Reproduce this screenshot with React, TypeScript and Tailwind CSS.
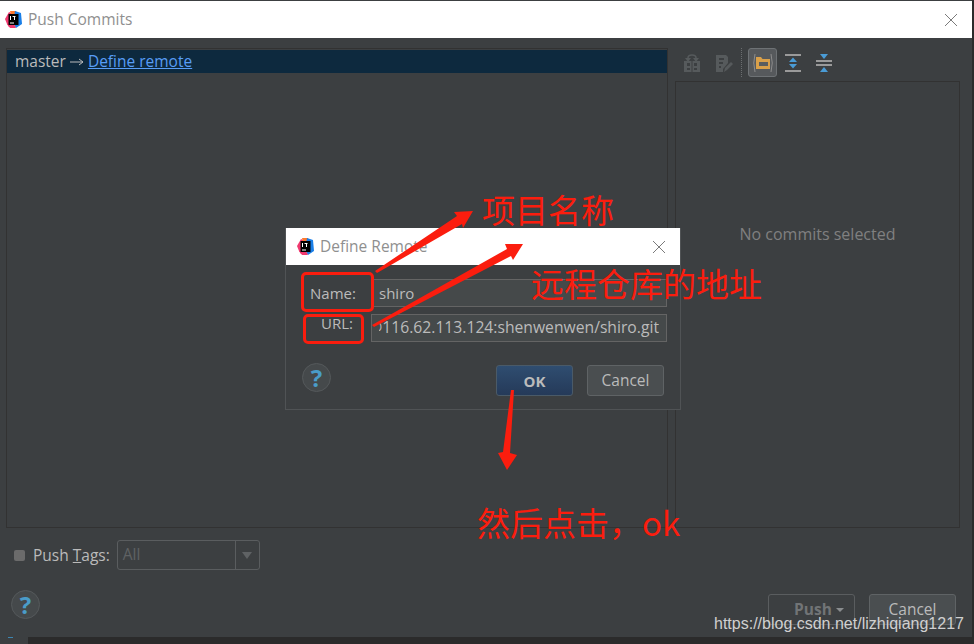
const ui = '"Open Sans", "Noto Sans", sans-serif';

function IdeaLogo() {
  return (
    <svg width="17" height="17" viewBox="0 0 17 17" className="shrink-0">
      <polygon points="0,8 4,1 8,3 7,14 4,16 2,13" fill="#f0396f" />
      <polygon points="5,0 11,0 12,4 6,4" fill="#fd7a2e" />
      <polygon points="10,0 16,2 17,13 11,17 8,12" fill="#1a7fe8" />
      <polygon points="2,13 8,11 11,17 5,17" fill="#f0396f" />
      <rect x="3.5" y="3" width="10" height="11" fill="#000" />
      <rect x="5" y="11.5" width="4" height="1" fill="#fff" />
      <rect x="5" y="5" width="1" height="4" fill="#fff" />
      <rect x="7.5" y="5" width="3" height="1" fill="#fff" />
      <rect x="9" y="5" width="1" height="4" fill="#fff" />
    </svg>
  );
}

function CloseX() {
  return (
    <svg width="14" height="14" viewBox="0 0 14 14">
      <path d="M1 1 L13 13 M13 1 L1 13" stroke="#7a7a7a" strokeWidth="1" fill="none" />
    </svg>
  );
}

function HelpButton() {
  return (
    <div className="w-[29px] h-[29px] rounded-full bg-[#45494b] border border-[#55595b] flex items-center justify-center text-[#4a9cc9] font-bold text-[24px] leading-none" style={{ fontFamily: ui }}>
      ?
    </div>
  );
}

function ToolbarIcons() {
  return (
    <div className="h-[29px] flex items-center pl-[8px]">
      <svg width="18" height="18" viewBox="0 0 18 18">
        <rect x="1" y="7" width="16" height="11" fill="#565a5c" />
        <path d="M5 6 V4 Q5 1 9 1 Q13 1 13 4 V6" stroke="#565a5c" strokeWidth="1.5" fill="none" />
        <polygon points="2,4 8,4 5,8" fill="#565a5c" />
        <polygon points="10,4 16,4 13,8" fill="#565a5c" />
        <rect x="4" y="9" width="3" height="3" fill="#3c3f41" />
        <rect x="11" y="9" width="3" height="3" fill="#3c3f41" />
        <rect x="4" y="14" width="3" height="2" fill="#3c3f41" />
        <rect x="11" y="14" width="3" height="2" fill="#3c3f41" />
        <rect x="8.5" y="7" width="1" height="11" fill="#3c3f41" />
      </svg>
      <svg width="18" height="18" viewBox="0 0 18 18" className="ml-[14px]">
        <path d="M1 1 H11 L13 3 V9 L8 15 V18 H1 Z" fill="#565a5c" />
        <rect x="4" y="4" width="5" height="2" fill="#3c3f41" />
        <rect x="4" y="8" width="4" height="2" fill="#3c3f41" />
        <rect x="4" y="12" width="2" height="2" fill="#3c3f41" />
        <path d="M9 18 L10 14 L16 8 L18 10 L12 16 Z" fill="#565a5c" />
      </svg>
      <div className="ml-[8px] h-[29px] border-l border-dotted border-[#6b6e70]" />
      <div className="ml-[6px] w-[29px] h-[29px] rounded-[3px] bg-[#56595c] border border-[#6e7275] flex items-center justify-center">
        <svg width="22" height="22" viewBox="0 0 22 22">
          <path d="M3 2 Q0.5 11 3 20 M19 2 Q21.5 11 19 20" stroke="#8d8d8d" strokeWidth="1" fill="none" />
          <path d="M4 5 H9 L10.5 7 H18 V17 H4 Z" fill="#d9a04a" />
          <rect x="7" y="10" width="9" height="4" fill="#5a5d5f" />
        </svg>
      </div>
      <svg width="16" height="18" viewBox="0 0 16 18" className="ml-[8px]">
        <rect x="0" y="0" width="16" height="2" fill="#9a9a9a" />
        <rect x="0" y="16" width="16" height="2" fill="#9a9a9a" />
        <polygon points="8,3.5 12,8 4,8" fill="#4a9cd6" />
        <polygon points="8,14.5 12,10 4,10" fill="#4a9cd6" />
      </svg>
      <svg width="16" height="18" viewBox="0 0 16 18" className="ml-[15px]">
        <rect x="0" y="6" width="16" height="2" fill="#9a9a9a" />
        <rect x="0" y="10" width="16" height="2" fill="#9a9a9a" />
        <polygon points="8,5 4,0 12,0" fill="#4a9cd6" />
        <polygon points="8,13 4,18 12,18" fill="#4a9cd6" />
      </svg>
    </div>
  );
}

function DefineRemoteDialog() {
  return (
    <div className="absolute left-[285px] top-[228px] w-[396px] h-[182px] bg-[#3c3f41] border border-[#505355] border-t-0 flex flex-col" style={{ fontFamily: ui }}>
      <div className="h-[37px] bg-white flex items-center pl-[11px] pr-[14px] gap-[6px]">
        <IdeaLogo />
        <span className="text-[15.5px] text-[#8f8f8f]">Define Remote</span>
        <span className="ml-auto"><CloseX /></span>
      </div>
      <div className="flex-1 pl-[16px] pr-[13px] pt-[14px] flex flex-col">
        <div className="flex items-center h-[28px]">
          <span className="w-[69px] shrink-0 text-[15px] text-[#bbbbbb] pl-[8px]">Name:</span>
          <div className="flex-1 h-[28px] bg-[#45494a] border border-[#646464] pl-[7px] flex items-center text-[15px] text-[#bbbbbb]">shiro</div>
        </div>
        <div className="flex items-center h-[28px] mt-[7px]">
          <span className="w-[69px] shrink-0 text-[15px] text-[#bbbbbb] pl-[19px] -mt-[9px]">URL:</span>
          <div className="flex-1 min-w-0 h-[28px] bg-[#45494a] border border-[#646464] px-[7px] flex items-center text-[15.7px] text-[#bbbbbb]">
            <div className="flex-1 min-w-0 overflow-hidden flex justify-end whitespace-nowrap">git@116.62.113.124:shenwenwen/shiro.git</div>
          </div>
        </div>
        <div className="flex items-start mt-[21px]">
          <HelpButton />
          <div className="ml-auto flex gap-[14px] pr-[3px] mt-[2px]">
            <div className="w-[77px] h-[31px] rounded-[3px] bg-gradient-to-b from-[#2f4d70] to-[#253a59] border border-[#4a5a68] flex items-center justify-center pt-px text-[15px] font-bold text-[#bbbbbb]">OK</div>
            <div className="w-[77px] h-[31px] rounded-[3px] bg-[#4a4e50] border border-[#5f6365] flex items-center justify-center pt-px text-[15.5px] text-[#bbbbbb]">Cancel</div>
          </div>
        </div>
      </div>
    </div>
  );
}

function Annotations() {
  const cjk = '"Noto Sans CJK SC", sans-serif';
  return (
    <>
      <svg width="974" height="644" className="absolute left-0 top-0 pointer-events-none">
        <polygon points="473,211 454,212 457,216 375,271 377,273 462,224 463,228" fill="#fb1d0e" />
        <polygon points="523,244 505,244 507,249 372,325 374,327 511,256 513,260" fill="#fb1d0e" />
        <polygon points="514,390 511,390 503,452 498,453 507,470 517,455 510,453" fill="#fb1d0e" />
      </svg>
      <div className="absolute left-[301px] top-[272px] w-[73px] h-[40px] border-[3px] border-[#fb1d0e] rounded-[5px]" />
      <div className="absolute left-[303px] top-[314px] w-[61px] h-[30px] border-[3px] border-[#fb1d0e] rounded-[5px]" />
      <span className="absolute left-[482px] top-[186px] text-[33px] leading-[46px] text-[#fb1d0e] whitespace-nowrap" style={{ fontFamily: cjk }}>项目名称</span>
      <span className="absolute left-[531px] top-[260px] text-[33px] leading-[46px] text-[#fb1d0e] whitespace-nowrap" style={{ fontFamily: cjk }}>远程仓库的地址</span>
      <span className="absolute left-[477px] top-[499px] text-[33px] leading-[46px] text-[#fb1d0e] whitespace-nowrap" style={{ fontFamily: cjk }}>然后点击，ok</span>
      <span className="absolute left-[714px] top-[613px] text-[16px] leading-[22px] text-[#d0d0d0] whitespace-nowrap" style={{ fontFamily: '"Liberation Sans", sans-serif' }}>https://blog.csdn.net/lizhiqiang1217</span>
    </>
  );
}

export default function App() {
  return (
    <div className="relative w-[974px] h-[644px] overflow-hidden bg-[#2b2b2b] flex" style={{ fontFamily: ui }}>
      <div className="w-[972px] bg-[#3c3f41] flex flex-col">
        <div className="h-px bg-[#3c3f41]" />
        <div className="h-[37px] bg-white flex items-center pl-[5px] pr-[14px] gap-[6px]">
          <IdeaLogo />
          <span className="text-[15.5px] text-[#8f8f8f]">Push Commits</span>
          <span className="ml-auto"><CloseX /></span>
        </div>

        <div className="flex-1 flex flex-col pl-[6px] pr-[12px] pt-[10px]">
          <div className="flex h-[480px] gap-[7px]">
            <div className="w-[662px] border border-[#323232] pt-px">
              <div className="h-[23px] bg-[#0d293e] flex items-center pl-[8px] text-[15.5px] text-[#bbbbbb]">
                master
                <svg width="16" height="8" viewBox="0 0 16 8" className="mx-[3px]">
                  <path d="M1 4 H14 M10 1 L14 4 L10 7" stroke="#bbbbbb" strokeWidth="1" fill="none" />
                </svg>
                <a className="text-[#589df6] underline">Define remote</a>
              </div>
            </div>
            <div className="flex-1 flex flex-col">
              <ToolbarIcons />
              <div className="flex-1 mt-[4px] border border-[#323232] flex items-start justify-center pt-[140px] text-[16px] text-[#808080]">
                No commits selected
              </div>
            </div>
          </div>

          <div className="flex items-center h-[30px] mt-[12px] pl-[8px] text-[15.5px] text-[#bbbbbb]">
            <div className="w-[11px] h-[11px] rounded-[2px] bg-[#6b6b6b]" />
            <span className="ml-[8px] pt-px">Push <span className="underline">T</span>ags:</span>
            <div className="ml-[7px] w-[143px] h-[30px] rounded-[3px] border border-[#5a5d5f] flex items-center">
              <span className="flex-1 pl-[5px] text-[#5f6264]">All</span>
              <div className="w-[24px] h-full border-l border-[#5a5d5f] flex items-center justify-center">
                <div className="w-0 h-0 border-x-[5px] border-x-transparent border-t-[7px] border-t-[#5f6264]" />
              </div>
            </div>
          </div>

          <div className="flex items-start mt-[20px] pl-[5px]">
            <HelpButton />
            <div className="ml-auto flex gap-[14px] mr-[4px] pt-[4px]">
              <div className="w-[87px] h-[31px] rounded-[3px] border border-[#5a5d5f] flex items-center justify-center gap-[4px] pl-[15px] text-[15.5px] font-bold text-[#717476]">
                Push
                <div className="w-0 h-0 border-x-[4px] border-x-transparent border-t-[4px] border-t-[#8a8d8f]" />
              </div>
              <div className="w-[87px] h-[31px] rounded-[3px] bg-[#4a4e50] border border-[#5f6365] flex items-center justify-center text-[15.5px] text-[#bbbbbb]">Cancel</div>
            </div>
          </div>
        </div>

        <div className="h-[7px] bg-[#2b2b2b] flex">
          <div className="w-[28px] h-full bg-[#3c3f41] pl-[8px]">
            <div className="w-[5px] h-px bg-[#3d85b0]" />
          </div>
        </div>
      </div>
      <DefineRemoteDialog />
      <Annotations />
    </div>
  );
}
